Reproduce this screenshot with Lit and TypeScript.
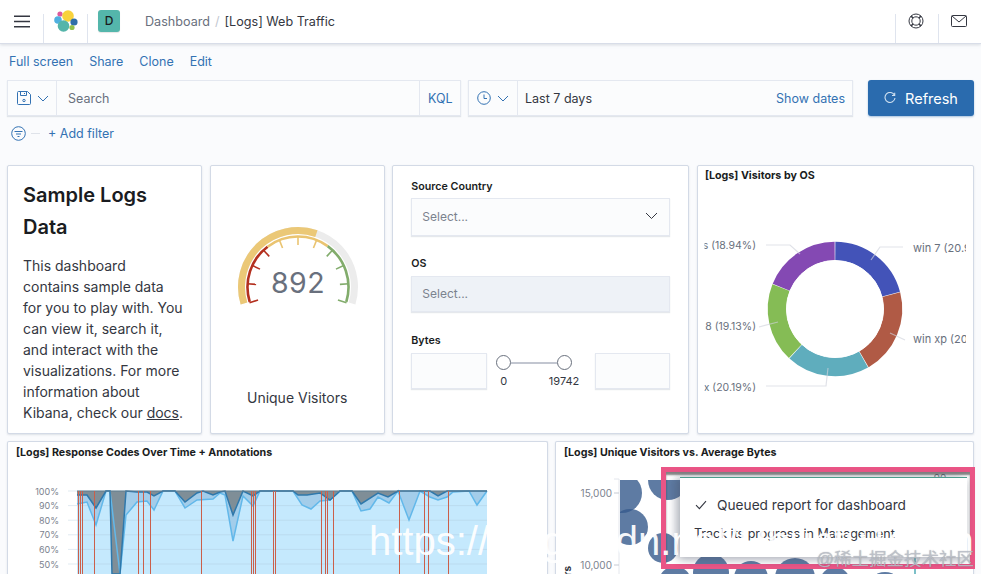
import { LitElement, html, svg, css } from "lit";
import { customElement } from "lit/decorators.js";

const TOP = 491;
const PLOT_LEFT = 77;
const PLOT_RIGHT = 487;
const PLOT_BOTTOM = 574;

// boundary of the grey band, read off the reference
const GREY_LINE = "77,495 87,495 96,508 106,491 110,491 112,574 120,574 126,491 137,492 147,492 154,496 163,491 175,491 185,502 197,493 203,491 213,495 220,492 225,491 233,515 243,491 253,496 260,491 293,491 298,495 307,495 320,493 330,500 340,491 352,491 361,504 378,493 388,497 398,491 430,491 438,496 447,491 487,491";
// boundary of the mid blue band
const BLUE_LINE = "77,504 87,502 96,525 106,491 110,491 120,574 126,515 137,502 147,501 154,510 163,491 175,491 185,508 197,500 213,499 220,493 225,495 233,541 243,496 253,506 260,491 293,491 302,505 311,509 320,501 330,500 340,491 352,491 361,511 370,509 378,497 389,503 398,491 409,520 420,491 430,497 438,500 447,497 453,492 469,491 477,505 487,491";
const ANNOTATIONS = [78, 80, 82, 94, 138, 143, 150, 201, 251, 253, 255, 273, 275, 321, 325, 327, 333, 399, 424, 428, 448];
const PERCENTS = ["100%", "90%", "80%", "70%", "60%", "50%"];

const BUBBLES: [number, number, number][] = [
	[622, 493, 20], [668, 480, 20], [630, 527, 18], [663, 548, 15], [675, 582, 16],
	[711, 572, 18], [751, 578, 17], [795, 578, 20], [835, 582, 15], [885, 590, 18],
];

const SLICES = [
	{ value: 20.94, color: "#4353b8" },
	{ value: 20.8, color: "#b05a45" },
	{ value: 20.19, color: "#5fadbd" },
	{ value: 19.13, color: "#85bc55" },
	{ value: 18.94, color: "#8449b3" },
];

const polar = (cx: number, cy: number, r: number, deg: number) => {
	const a = (deg * Math.PI) / 180;
	return [cx + r * Math.sin(a), cy - r * Math.cos(a)];
};

const arc = (cx: number, cy: number, r: number, from: number, to: number) => {
	const [x1, y1] = polar(cx, cy, r, from);
	const [x2, y2] = polar(cx, cy, r, to);
	return `M${x1} ${y1}A${r} ${r} 0 ${to - from > 180 ? 1 : 0} 1 ${x2} ${y2}`;
};

@customElement("app-root")
export class AppRoot extends LitElement {
	#logo() {
		return html`<svg class="logo" width="24" height="24" viewBox="0 0 24 24">
			<circle cx="6" cy="5" r="2.6" fill="#dd5a9c" />
			<circle cx="4" cy="11" r="3.8" fill="#4fb0e0" />
			<circle cx="14" cy="7" r="5.8" fill="#f8d23c" />
			<circle cx="20" cy="13" r="3.6" fill="#2f6fa8" />
			<circle cx="9.5" cy="17" r="5.8" fill="#55b5aa" />
			<circle cx="18" cy="18.5" r="2.6" fill="#93c24a" />
		</svg>`;
	}

	#gauge() {
		const cx = 298;
		const cy = 287;
		const ticks = [];
		for (let i = 0; i <= 10; i++) {
			const deg = -108 + i * 21.6;
			const [x1, y1] = polar(cx, cy, 51, deg);
			const [x2, y2] = polar(cx, cy, 42, deg);
			const color = i < 4 ? "#b3301f" : i === 4 || i === 5 || (i === 6 && deg < 43) ? "#eac471" : "#82ac6c";
			ticks.push(svg`<line x1=${x1} y1=${y1} x2=${x2} y2=${y2} stroke=${color} stroke-width="1.6" />`);
		}
		return html`<svg class="gauge" width="173" height="120" viewBox="211 220 173 120">
			<path d=${arc(cx, cy, 56.5, -107, 107)} fill="none" stroke="#ececec" stroke-width="7" />
			<path d=${arc(cx, cy, 56.5, -107, 19)} fill="none" stroke="#ebc877" stroke-width="7" />
			<path d=${arc(cx, cy, 50.5, -107, -37)} fill="none" stroke="#b3301f" stroke-width="2.6" />
			<path d=${arc(cx, cy, 50.5, -37, 36)} fill="none" stroke="#eac471" stroke-width="2.6" />
			<path d=${arc(cx, cy, 50.5, 36, 107)} fill="none" stroke="#82ac6c" stroke-width="2.6" />
			${ticks}
			<text x=${cx} y="293" text-anchor="middle" class="gauge-value">892</text>
		</svg>`;
	}

	#donut() {
		const cx = 835;
		const cy = 309;
		let start = 0;
		const arcs = SLICES.map((s) => {
			const end = start + s.value * 3.6;
			const d = arc(cx, cy, 58, start + 0.3, end - 0.3);
			start = end;
			return svg`<path d=${d} fill="none" stroke=${s.color} stroke-width="18.5" />`;
		});
		return html`<svg class="fill" width="275" height="246" viewBox="698 186 275 246">
			<defs>
				<clipPath id="labels"><rect x="704.5" y="186" width="261.5" height="246" /></clipPath>
			</defs>
			${arcs}
			<circle cx=${cx} cy=${cy} r="48.5" fill="none" stroke="#fff" stroke-width="1" />
			<g fill="none" stroke="#cfd3dc" stroke-opacity="0.65" stroke-width="1.2">
				<path d="M766 245H790L800 254" />
				<path d="M759 327L778 322" />
				<path d="M766 386H826L828 368" />
				<path d="M903 247H880L871 260" />
				<path d="M905 340L890 333" />
			</g>
			<g clip-path="url(#labels)" class="pie-label">
				<text class="left" x="756" y="249" text-anchor="end">ios (18.94%)</text>
				<text class="left" x="756" y="330" text-anchor="end">win 8 (19.13%)</text>
				<text class="left" x="756" y="391" text-anchor="end">osx (20.19%)</text>
				<text x="913" y="252">win 7 (20.94%)</text>
				<text x="913" y="343">win xp (20.80%)</text>
			</g>
		</svg>`;
	}

	#areaChart() {
		const area = (line: string) => `${PLOT_LEFT},${TOP} ${line} ${PLOT_RIGHT},${TOP}`;
		return html`<svg class="fill" width="539" height="112" viewBox="8 462 539 112">
			<rect x=${PLOT_LEFT} y=${TOP} width=${PLOT_RIGHT - PLOT_LEFT} height=${PLOT_BOTTOM - TOP} fill="#c5e9fd" />
			${PERCENTS.map((p, i) => {
				const y = TOP + i * 14.6;
				return svg`
					<text x="59" y=${y + 3.5} text-anchor="end" class="axis small">${p}</text>
					<line x1="68" x2=${PLOT_RIGHT} y1=${y} y2=${y} stroke="#a9c4d8" stroke-opacity="0.35" />`;
			})}
			<polygon points=${area(BLUE_LINE)} fill="#a3cdea" />
			<polygon points=${area(GREY_LINE)} fill="#7f8e97" />
			<polyline points=${BLUE_LINE} fill="none" stroke="#62b8ea" stroke-width="1.5" />
			<polyline points=${GREY_LINE} fill="none" stroke="#2f78ab" stroke-width="1.5" />
			<line x1=${PLOT_LEFT} x2=${PLOT_RIGHT} y1=${TOP} y2=${TOP} stroke="#5e7d90" />
			${ANNOTATIONS.map((x) => svg`<line x1=${x + 0.5} x2=${x + 0.5} y1=${TOP} y2=${PLOT_BOTTOM} stroke="#cb5f4a" stroke-width="1" />`)}
		</svg>`;
	}

	#bubbleChart() {
		return html`<svg class="fill" width="417" height="112" viewBox="556 462 417 112">
			<defs>
				<clipPath id="plot"><rect x="620" y="480" width="353" height="94" /></clipPath>
			</defs>
			<line x1="619" x2="619" y1="479" y2="574" stroke="#e4e7ed" />
			<line x1="614" x2="619" y1="479" y2="479" stroke="#e4e7ed" />
			<line x1="614" x2="619" y1="493" y2="493" stroke="#c5cad3" />
			<line x1="614" x2="619" y1="565" y2="565" stroke="#c5cad3" />
			<text x="612" y="497" text-anchor="end" class="axis">15,000</text>
			<text x="612" y="569" text-anchor="end" class="axis">10,000</text>
			<text x="940" y="482" text-anchor="middle" class="axis">90</text>
			<text transform="translate(571 566) rotate(-90)" text-anchor="end" class="axis-title">Unique Visitors</text>
			<g clip-path="url(#plot)">
				${BUBBLES.map(([x, y, r]) => svg`<circle cx=${x} cy=${y} r=${r} fill="#365a8c" fill-opacity="0.8" />`)}
				<line x1="915" x2="915" y1="556" y2="574" stroke="#7cc0c8" stroke-width="2" />
			</g>
		</svg>`;
	}

	render() {
		return html`
			<header class="header">
				<div class="section menu">
					<svg width="16" height="13" viewBox="0 0 16 13"><path d="M0 1.2H16M0 6.5H16M0 11.8H16" stroke="#343741" stroke-width="1.6" /></svg>
				</div>
				<div class="section logo-cell">${this.#logo()}</div>
				<div class="section avatar-cell"><span class="avatar">D</span></div>
				<nav class="crumbs"><span class="muted">Dashboard</span><span class="slash">/</span><span>[Logs] Web Traffic</span></nav>
				<div class="section icon-cell">
					<svg width="16" height="16" viewBox="0 0 16 16" fill="none" stroke="#343741" stroke-width="1">
						<circle cx="8" cy="8" r="7" />
						<circle cx="8" cy="8" r="4.2" />
						<path d="M3 3L5 5M13 3L11 5M3 13L5 11M13 13L11 11" stroke-width="1.6" />
					</svg>
				</div>
				<div class="section icon-cell last">
					<svg width="16" height="12" viewBox="0 0 16 12" fill="none" stroke="#343741" stroke-width="1">
						<rect x="0.5" y="0.5" width="15" height="11" rx="1" />
						<path d="M1 1L8 7L15 1" />
					</svg>
				</div>
			</header>

			<div class="actions">
				<a>Full screen</a><a>Share</a><a>Clone</a><a>Edit</a>
			</div>

			<div class="query">
				<div class="group search">
					<div class="prepend">
						<svg width="14" height="14" viewBox="0 0 14 14" fill="none" stroke="#3372b3">
							<path d="M.5 1.5a1 1 0 0 1 1-1h9l3 3v9a1 1 0 0 1-1 1h-11a1 1 0 0 1-1-1z" />
							<path d="M3.5.5v4h6v-4M7.5 2v1" />
							<circle cx="7" cy="9.5" r="1.2" />
						</svg>
						<svg class="chev" width="12" height="7" viewBox="0 0 12 7"><path d="M1 1L6 6L11 1" fill="none" stroke="#3372b3" /></svg>
					</div>
					<div class="input">Search</div>
					<a class="kql">KQL</a>
				</div>
				<div class="group dates">
					<div class="prepend clock">
						<svg width="14" height="14" viewBox="0 0 14 14" fill="none" stroke="#3372b3">
							<circle cx="7" cy="7" r="6.3" />
							<path d="M7 3.5V7.5H10" />
						</svg>
						<svg class="chev" width="12" height="7" viewBox="0 0 12 7"><path d="M1 1L6 6L11 1" fill="none" stroke="#3372b3" /></svg>
					</div>
					<div class="range">Last 7 days</div>
					<a class="show">Show dates</a>
				</div>
				<button class="refresh">
					<svg width="12" height="12" viewBox="0 0 12 12" fill="none" stroke="#cfe0f0" stroke-width="1.1">
						<path d="M10.5 3.2A5 5 0 1 0 11 6" />
						<path d="M10.7.8V3.5H8" />
					</svg>
					Refresh
				</button>
			</div>

			<div class="filters">
				<svg width="15" height="15" viewBox="0 0 15 15" fill="none" stroke="#3372b3">
					<circle cx="7.5" cy="7.5" r="6.8" />
					<path d="M3.5 5.5H11.5M5 8H10M6.5 10.5H8.5" />
				</svg>
				<span class="dash"></span>
				<a>+ Add filter</a>
			</div>

			<section class="row top">
				<article class="panel intro">
					<h2>Sample Logs Data</h2>
					<p>This dashboard<br />contains sample data<br />for you to play with. You<br />can view it, search it,<br />and interact with the<br />visualizations. For more<br />information about<br />Kibana, check our <u>docs</u>.</p>
				</article>
				<article class="panel metric">
					${this.#gauge()}
					<div class="metric-label">Unique Visitors</div>
				</article>
				<article class="panel controls">
					<label>Source Country</label>
					<div class="select">Select...
						<svg width="13" height="8" viewBox="0 0 13 8"><path d="M1 1L6.5 6.5L12 1" fill="none" stroke="#343741" /></svg>
					</div>
					<label>OS</label>
					<div class="select disabled">Select...</div>
					<label>Bytes</label>
					<div class="bytes">
						<div class="box"></div>
						<div class="slider">
							<div class="track"><span class="thumb"></span><span class="bar"></span><span class="thumb"></span></div>
							<div class="ends"><span>0</span><span>19742</span></div>
						</div>
						<div class="box"></div>
					</div>
				</article>
				<article class="panel pie">
					<div class="title">[Logs] Visitors by OS</div>
					${this.#donut()}
				</article>
			</section>

			<section class="row bottom">
				<article class="panel wide">
					<div class="title">[Logs] Response Codes Over Time + Annotations</div>
					${this.#areaChart()}
				</article>
				<article class="panel narrow">
					<div class="title">[Logs] Unique Visitors vs. Average Bytes</div>
					${this.#bubbleChart()}
				</article>
			</section>

			<div class="highlight">
				<div class="toast">
					<div class="toast-head">
						<svg width="12" height="10" viewBox="0 0 12 10"><path d="M1 5.2L4.4 8.6L11 1.2" fill="none" stroke="#343741" stroke-width="1.1" /></svg>
						Queued report for dashboard
					</div>
					<div class="toast-body">Track its progress in Management</div>
				</div>
			</div>
			<div class="mark-url">https://blog.csdn.net/UbuntuTouch</div>
			<div class="mark-cn">@稀土掘金技术社区</div>
		`;
	}

	static styles = css`
		:host {
			display: block;
			position: relative;
			width: 981px;
			height: 574px;
			overflow: hidden;
			background: #fafbfd;
			color: #343741;
			font-family: Inter, "Noto Sans", sans-serif;
			font-size: 14px;
		}

		a {
			color: #3372b3;
		}

		.header {
			display: flex;
			height: 43px;
			background: #fff;
			border-bottom: 1px solid #d8dde8;
			box-shadow: 0 1px 3px rgba(152, 162, 179, 0.35);
		}

		.section {
			display: flex;
			align-items: center;
			justify-content: center;
			box-sizing: border-box;
			height: 29px;
			margin-top: 14px;
			padding-bottom: 15px;
			border-left: 1px solid #dfe4ee;
		}

		.menu {
			width: 43px;
			border-left: 0;
		}

		.logo-cell {
			width: 44px;
		}

		.avatar-cell {
			width: 44px;
			padding-right: 1px;
		}

		.icon-cell {
			width: 43px;
			padding-right: 2px;
		}

		.avatar {
			flex: none;
			width: 22px;
			height: 22px;
			border-radius: 3px;
			background: #54b6ab;
			color: #1a1c21;
			font-size: 12px;
			font-weight: 500;
			line-height: 22px;
			text-align: center;
			box-shadow: 0 1px 1px rgba(0, 0, 0, 0.1);
		}

		.crumbs {
			flex: 1;
			display: flex;
			align-items: center;
			padding: 0 0 1px 14px;
			font-size: 12.6px;
		}

		.muted {
			color: #69707d;
		}

		.slash {
			margin: 0 5px;
			color: #c2c7d0;
		}

		.actions {
			display: flex;
			gap: 16px;
			height: 19px;
			margin: 8px 0 0 9px;
			font-size: 12.5px;
			line-height: 20px;
		}

		.query {
			display: flex;
			margin: 9px 0 0 7px;
			height: 36px;
		}

		.group {
			display: flex;
			align-items: center;
			box-sizing: border-box;
			height: 36px;
			background: #fbfcfd;
			border: 1px solid #e4e8f0;
			box-shadow: 0 1px 1px rgba(152, 162, 179, 0.25);
			font-size: 12.5px;
		}

		.search {
			width: 454px;
			margin-right: 7px;
		}

		.dates {
			width: 385px;
			margin-right: 15px;
		}

		.prepend {
			display: flex;
			align-items: center;
			gap: 6px;
			box-sizing: border-box;
			width: 49px;
			height: 100%;
			padding-left: 9px;
			border-right: 1px solid #e4e8f0;
		}

		.clock {
			padding-left: 8px;
		}

		.input {
			flex: 1;
			padding-left: 11px;
			color: #69707d;
		}

		.kql {
			display: flex;
			align-items: center;
			box-sizing: border-box;
			width: 41px;
			height: 100%;
			padding-left: 8px;
			border-left: 1px solid #e4e8f0;
		}

		.range {
			flex: 1;
			padding-left: 7px;
		}

		.show {
			padding-right: 7px;
		}

		.refresh {
			display: flex;
			align-items: center;
			justify-content: center;
			gap: 9px;
			width: 106px;
			height: 36px;
			padding: 0;
			border: 0;
			border-radius: 3px;
			background: #2a6bae;
			box-shadow: 0 1px 2px rgba(42, 107, 174, 0.4);
			color: #fff;
			font-family: inherit;
			font-size: 14.5px;
		}

		.filters {
			display: flex;
			align-items: center;
			height: 20px;
			margin: 7px 0 0 11px;
			font-size: 12.5px;
		}

		.dash {
			width: 9px;
			height: 1px;
			margin: 0 8px 0 5px;
			background: #dfe3ea;
		}

		.row {
			display: flex;
			justify-content: space-between;
			width: 967px;
			margin-left: 7px;
		}

		.top {
			height: 269px;
			margin-top: 22px;
		}

		.bottom {
			height: 140px;
			margin-top: 7px;
		}

		.panel {
			box-sizing: border-box;
			overflow: hidden;
			background: #fff;
			border: 1px solid #d3dae6;
			border-radius: 2px;
			box-shadow: 0 1px 2px rgba(152, 162, 179, 0.3);
		}

		.intro {
			width: 195px;
			padding: 13px 0 0 15px;
		}

		.metric {
			display: flex;
			flex-direction: column;
			align-items: center;
			width: 175px;
		}

		.controls {
			width: 297px;
			padding: 14px 18px 0 18px;
		}

		.pie {
			width: 277px;
		}

		.wide {
			width: 541px;
		}

		.narrow {
			width: 419px;
		}

		.bottom .panel {
			border-bottom: 0;
		}

		h2 {
			margin: 0 0 12px;
			padding-right: 40px;
			font-size: 20px;
			font-weight: 600;
			line-height: 32px;
			color: #1a1c21;
		}

		p {
			margin: 0;
			font-size: 14px;
			line-height: 21px;
			white-space: nowrap;
		}

		.gauge {
			margin-top: 54px;
			flex: none;
		}

		.gauge-value {
			font-size: 28.5px;
			fill: #69707d;
			letter-spacing: 0.5px;
		}

		.metric-label {
			margin-top: 49px;
			font-size: 14px;
		}

		label {
			display: block;
			font-size: 10.7px;
			font-weight: 600;
			line-height: 14px;
			color: #1a1c21;
		}

		.select {
			display: flex;
			align-items: center;
			justify-content: space-between;
			box-sizing: border-box;
			height: 38px;
			margin: 4px 0 21px;
			padding: 0 11px 2px 10px;
			background: #fbfcfd;
			border: 1px solid #e4e8f0;
			box-shadow: 0 1px 1px rgba(152, 162, 179, 0.25);
			color: #7b828e;
			font-size: 12px;
		}

		.select.disabled {
			height: 36px;
			margin: 5px 0 22px;
			background: #eef2f7;
		}

		.bytes {
			display: flex;
			margin-top: 5px;
		}

		.box {
			box-sizing: border-box;
			flex: none;
			width: 76px;
			height: 36px;
			background: #fbfcfd;
			border: 1px solid #e4e8f0;
			box-shadow: 0 1px 1px rgba(152, 162, 179, 0.25);
		}

		.bytes .box:last-child {
			width: 75px;
		}

		.slider {
			flex: 1;
			padding: 2px 0 0;
			font-size: 11px;
			color: #343741;
		}

		.track {
			display: flex;
			align-items: center;
			padding: 0 23px 0 9px;
		}

		.thumb {
			flex: none;
			box-sizing: border-box;
			width: 15px;
			height: 15px;
			border: 1px solid #69707d;
			border-radius: 50%;
			background: #fff;
		}

		.bar {
			flex: 1;
			height: 2px;
			background: #c2c6d0;
		}

		.ends {
			display: flex;
			justify-content: space-between;
			margin-top: 4px;
			padding: 0 16px 0 13px;
		}

		.title {
			height: 20px;
			padding: 0 8px;
			color: #1a1c21;
			font-size: 10.7px;
			font-weight: 700;
			line-height: 21px;
			white-space: nowrap;
		}

		.pie .title {
			padding-left: 7px;
			line-height: 20px;
		}

		.fill {
			display: block;
		}

		.pie-label text {
			font-size: 11px;
			fill: #69707d;
		}

		.pie-label text.left {
			font-size: 10.5px;
		}

		.axis {
			font-size: 10px;
			fill: #7b828e;
		}

		.axis.small {
			font-size: 9px;
		}

		.axis-title {
			font-size: 10px;
			font-weight: 700;
			fill: #343741;
		}

		.highlight {
			position: absolute;
			left: 661px;
			top: 467px;
			box-sizing: border-box;
			width: 314px;
			height: 102px;
			padding: 5px 3px 7px 14px;
			border: 5px solid #ea5586;
			box-shadow: inset 0 3px 2px rgba(30, 30, 30, 0.55);
		}

		.toast {
			box-sizing: border-box;
			height: 80px;
			margin-top: -0.5px;
			background: #fff;
			border-top: 1px solid #4a9c8c;
			box-shadow: -5px 0 8px rgba(70, 80, 100, 0.3), 0 4px 8px rgba(70, 80, 100, 0.25);
		}

		.toast-head {
			display: flex;
			align-items: center;
			gap: 10px;
			padding: 15px 0 0 15px;
			font-size: 13.7px;
			line-height: 24px;
		}

		.toast-body {
			margin-top: 8px;
			padding-left: 14px;
			font-size: 12.5px;
			line-height: 18px;
		}

		.mark-url {
			position: absolute;
			left: 369px;
			top: 518px;
			color: rgba(255, 255, 255, 0.95);
			font-family: "Liberation Sans", sans-serif;
			font-size: 40px;
			line-height: 46px;
			white-space: nowrap;
		}

		.mark-cn {
			position: absolute;
			right: 7px;
			top: 549px;
			color: rgba(190, 195, 205, 0.85);
			font-family: "Liberation Sans", "Noto Sans CJK SC", sans-serif;
			font-size: 17.5px;
			line-height: 20px;
			white-space: nowrap;
			text-shadow: 0 0 1px rgba(90, 90, 90, 0.5);
		}
	`;
}
